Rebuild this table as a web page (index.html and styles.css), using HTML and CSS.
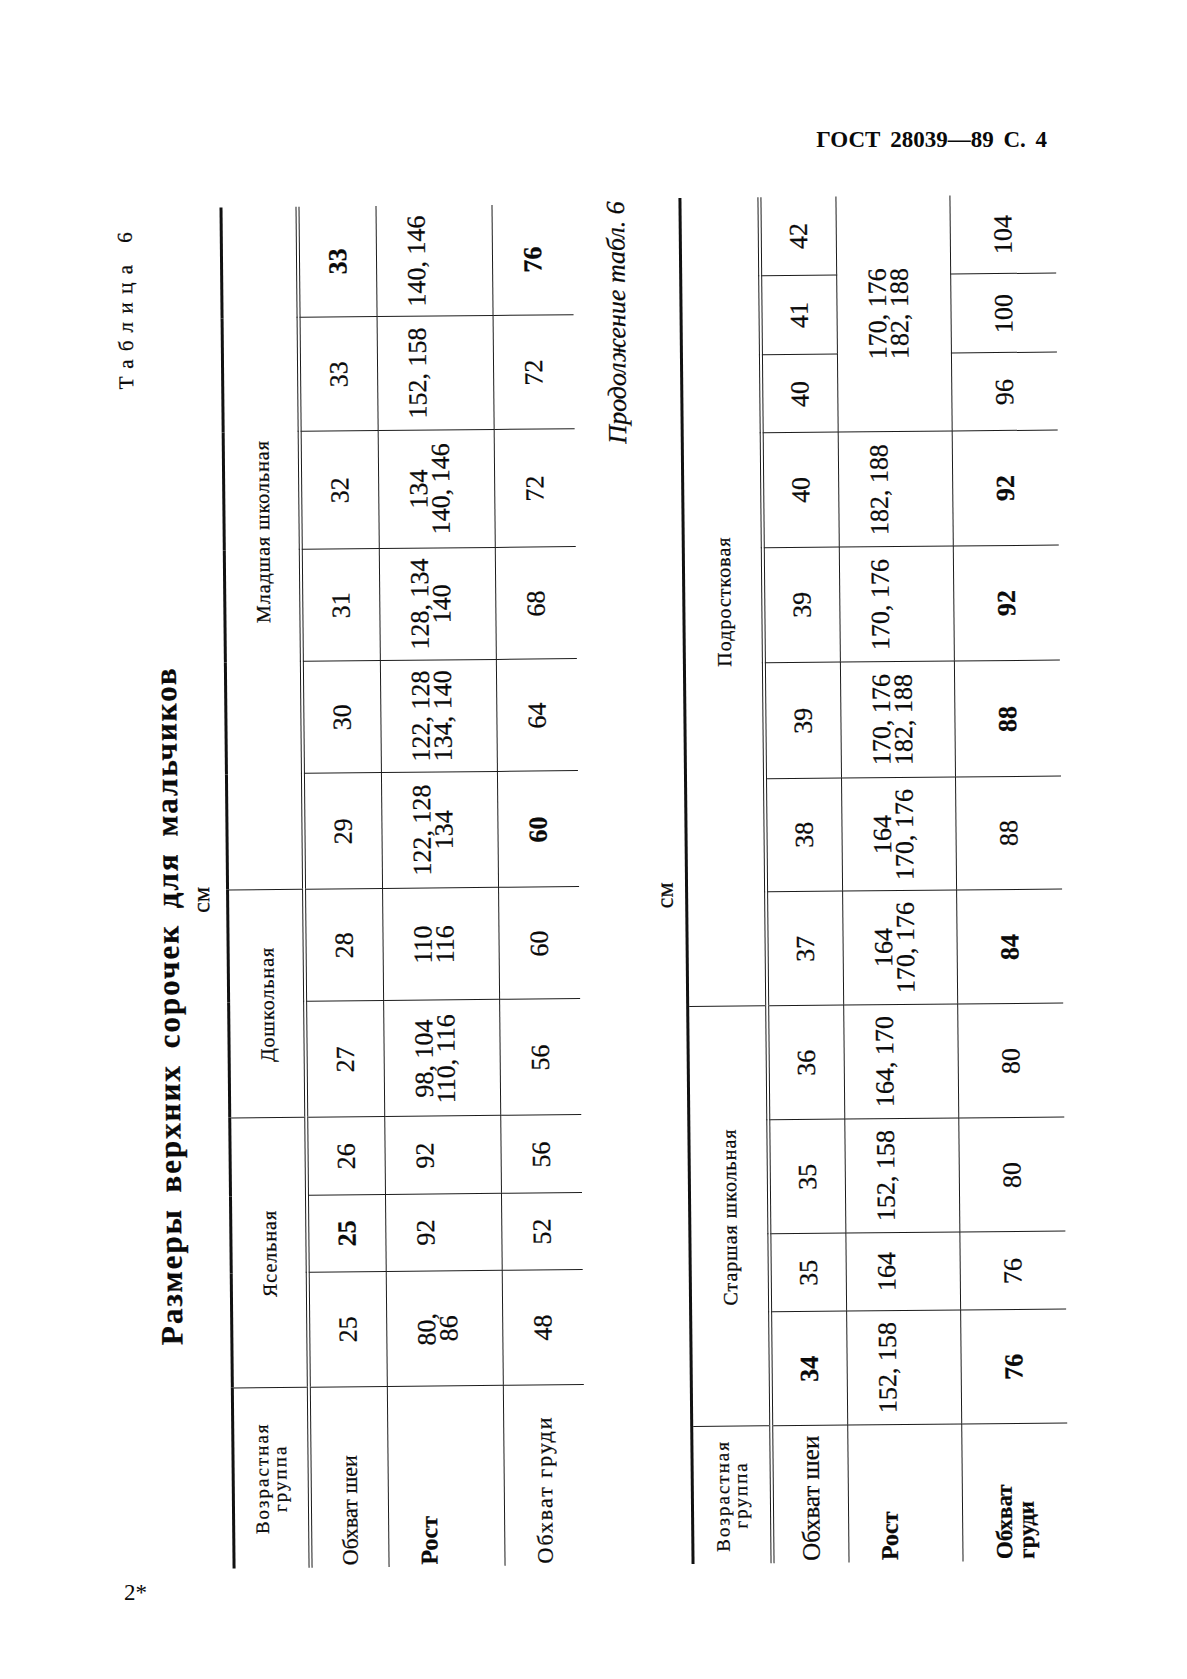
FILE: index.html
```html
<!DOCTYPE html>
<html lang="ru">
<head>
<meta charset="utf-8">
<title>ГОСТ 28039—89 С. 4</title>
<link rel="stylesheet" href="styles.css">
</head>
<body>
<div class="page">
  <header class="run-head">ГОСТ 28039—89 С. 4</header>

  <section class="sheet">
    <p class="tab-no">Таблица 6</p>
    <h1 class="tab-title">Размеры верхних сорочек для мальчиков</h1>
    <p class="unit">см</p>

    <table class="grid t1">
      <colgroup>
        <col><col><col><col><col><col><col><col><col><col><col><col>
      </colgroup>
      <tr class="hdr">
        <td class="age">Возрастная<br>группа</td>
        <td class="grp" colspan="3">Ясельная</td>
        <td class="grp" colspan="2">Дошкольная</td>
        <td class="grp grp-jr" colspan="6">Младшая школьная</td>
      </tr>
      <tr class="neck">
        <td class="lbl">Обхват шеи</td>
        <td>25</td><td class="b">25</td><td>26</td><td>27</td><td>28</td><td>29</td><td>30</td><td>31</td><td>32</td><td>33</td><td class="b">33</td>
      </tr>
      <tr class="height">
        <td class="lbl lbl-h">Рост</td>
        <td>80,<br>86</td><td>92</td><td>92</td><td>98, 104<br>110, 116</td><td>110<br>116</td><td>122, 128<br>134</td><td>122, 128<br>134, 140</td><td>128, 134<br>140</td><td>134<br>140, 146</td><td>152, 158</td><td>140, 146</td>
      </tr>
      <tr class="chest">
        <td class="lbl lbl-c">Обхват груди</td>
        <td>48</td><td>52</td><td>56</td><td>56</td><td>60</td><td class="b">60</td><td>64</td><td>68</td><td>72</td><td>72</td><td class="b">76</td>
      </tr>
    </table>

    <p class="cont">Продолжение табл. 6</p>
    <p class="unit unit2">см</p>

    <table class="grid t2">
      <colgroup>
        <col><col><col><col><col><col><col><col><col><col><col><col><col>
      </colgroup>
      <tr class="hdr">
        <td class="age">Возрастная<br>группа</td>
        <td class="grp" colspan="4">Старшая школьная</td>
        <td class="grp" colspan="8">Подростковая</td>
      </tr>
      <tr class="neck">
        <td class="lbl lbl-n2">Обхват шеи</td>
        <td class="b">34</td><td>35</td><td>35</td><td>36</td><td>37</td><td>38</td><td>39</td><td>39</td><td>40</td><td>40</td><td>41</td><td>42</td>
      </tr>
      <tr class="height">
        <td class="lbl lbl-h">Рост</td>
        <td>152, 158</td><td>164</td><td>152, 158</td><td>164, 170</td><td>164<br>170, 176</td><td>164<br>170, 176</td><td>170, 176<br>182, 188</td><td>170, 176</td><td>182, 188</td><td colspan="3">170, 176<br>182, 188</td>
      </tr>
      <tr class="chest">
        <td class="lbl lbl-c2">Обхват<br>груди</td>
        <td class="b">76</td><td>76</td><td>80</td><td>80</td><td class="b">84</td><td>88</td><td class="b">88</td><td class="b">92</td><td class="b">92</td><td>96</td><td>100</td><td>104</td>
      </tr>
    </table>
  </section>

  <footer class="folio">2*</footer>
</div>
</body>
</html>
```

FILE: styles.css
```css
* { box-sizing: border-box; }

html, body {
  margin: 0;
  padding: 0;
  background: #fff;
}

body {
  font-family: "Liberation Serif", "Times New Roman", serif;
  color: #0a0a0a;
}

.page {
  width: 1187px;
  height: 1679px;
  padding-top: 127px;
  overflow: hidden;
}

/* running head */
.run-head {
  font-weight: bold;
  font-size: 23px;
  line-height: 26px;
  text-align: right;
  padding-right: 140px;
  word-spacing: 4px;
}

/* landscape sheet, turned to read bottom-to-top */
.sheet {
  writing-mode: vertical-rl;
  transform: rotate(179.45deg);
  inline-size: 1385px;
  block-size: 980px;
  margin: 37px 0 0 100px;
  -webkit-text-stroke: 0.25px #0a0a0a;
}

.sheet p, .sheet h1 {
  margin: 0;
  font-weight: normal;
}

.tab-no {
  margin-block-start: 19px !important;
  font-size: 21px;
  line-height: 24px;
  letter-spacing: 0.4em;
  text-align: end;
  padding-inline-end: 30px;
}

.sheet .tab-title {
  margin-block-start: 10px;
  font-size: 31px;
  font-weight: bold;
  line-height: 30px;
  text-align: center;
  padding-inline-end: 239px;
  word-spacing: 6px;
  letter-spacing: 2px;
}

.unit {
  margin-block-start: 6px !important;
  font-size: 24px;
  line-height: 24px;
  text-align: center;
  padding-inline-end: 28px;
}

.cont {
  margin-block-start: 29px !important;
  font-style: italic;
  font-size: 26px;
  line-height: 28px;
  text-align: end;
  padding-inline-end: 12px;
}

.unit2 {
  margin-block-start: 16px !important;
}

/* tables */
.grid {
  border-collapse: collapse;
  table-layout: fixed;
  margin-inline-start: 10px;
  font-size: 26px;
  line-height: 22px;
}

.t1 { margin-block-start: 13px; inline-size: 1361px; }
.t2 { margin-block-start: 9px; inline-size: 1366px; }

.grid td {
  border: 1px solid #1c1c1c;
  padding: 0;
  text-align: center;
  vertical-align: middle;
  white-space: nowrap;
}

.grid tr > td:first-child { border-inline-start: none; }
.grid tr > td:last-child { border-inline-end: none; }
.grid tr:last-child td { border-block-end: none; }

.grid .hdr td {
  border-block-start: 3px solid #111;
  border-block-end: 4px double #1c1c1c;
}

.grid .height td {
  vertical-align: top;
  padding-block-start: 29px;
}

.grid .b { font-weight: bold; }

.t1 .hdr { block-size: 77px; }
.t1 .neck { block-size: 78px; }
.t1 .height { block-size: 116px; }
.t1 .chest { block-size: 81px; }

.t2 .hdr { block-size: 79px; }
.t2 .neck { block-size: 77px; }
.t2 .height { block-size: 114px; }
.t2 .chest { block-size: 105px; }

/* column widths (along the page height) */
.t1 col:nth-child(1) { inline-size: 180px; }
.t1 col:nth-child(2) { inline-size: 115px; }
.t1 col:nth-child(3) { inline-size: 77px; }
.t1 col:nth-child(4) { inline-size: 78px; }
.t1 col:nth-child(5) { inline-size: 116px; }
.t1 col:nth-child(6) { inline-size: 112px; }
.t1 col:nth-child(7) { inline-size: 116px; }
.t1 col:nth-child(8) { inline-size: 112px; }
.t1 col:nth-child(9) { inline-size: 112px; }
.t1 col:nth-child(10) { inline-size: 118px; }
.t1 col:nth-child(11) { inline-size: 114px; }
.t1 col:nth-child(12) { inline-size: 111px; }

.t2 col:nth-child(1) { inline-size: 137px; }
.t2 col:nth-child(2) { inline-size: 114px; }
.t2 col:nth-child(3) { inline-size: 78px; }
.t2 col:nth-child(4) { inline-size: 114px; }
.t2 col:nth-child(5) { inline-size: 114px; }
.t2 col:nth-child(6) { inline-size: 114px; }
.t2 col:nth-child(7) { inline-size: 113px; }
.t2 col:nth-child(8) { inline-size: 116px; }
.t2 col:nth-child(9) { inline-size: 115px; }
.t2 col:nth-child(10) { inline-size: 115px; }
.t2 col:nth-child(11) { inline-size: 78px; }
.t2 col:nth-child(12) { inline-size: 79px; }
.t2 col:nth-child(13) { inline-size: 79px; }

.grid .age {
  font-size: 19px;
  line-height: 18px;
  letter-spacing: 2px;
}

.grid .grp {
  font-size: 20px;
  letter-spacing: 1px;
}

.grid .grp-jr {
  padding-inline-start: 34px;
}

.grid .lbl {
  text-align: start;
  padding-inline-start: 2px;
  font-size: 22px;
}

.grid .lbl-h {
  font-size: 24px;
  font-weight: bold;
}

.grid .lbl-c {
  letter-spacing: 2px;
}

.grid .lbl-n2 {
  font-size: 25px;
}

.grid .lbl-c2 {
  font-size: 23px;
  font-weight: bold;
  line-height: 22px;
}

/* folio */
.folio {
  margin-top: 6px;
  padding-left: 124px;
  font-size: 23px;
  line-height: 24px;
}
```
